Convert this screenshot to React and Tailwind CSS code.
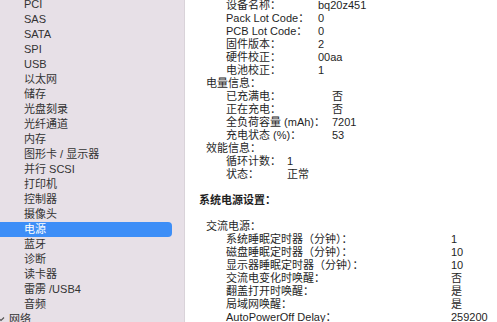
import React from "react";

const font = { fontFamily: '"Liberation Sans", "Noto Sans CJK SC", sans-serif' };

const sidebarItems = [
  "PCI", "SAS", "SATA", "SPI", "USB", "以太网", "储存", "光盘刻录", "光纤通道", "内存",
  "图形卡 / 显示器", "并行 SCSI", "打印机", "控制器", "摄像头", "电源", "蓝牙", "诊断", "读卡器",
  "雷雳 /USB4", "音频",
];

function Row({ label, value, labelW, indent }) {
  return (
    <div className={`flex h-[13px] items-center whitespace-nowrap ${indent}`}>
      <div className={labelW}>{label}</div>
      <div>{value}</div>
    </div>
  );
}

export default function App() {
  return (
    <div className="flex h-[322px] w-[497px] overflow-hidden text-[11px] leading-[13px]" style={font}>
      <div className="w-[185px] shrink-0 border-r border-[#d9d3d9] bg-[#e7e0e7] text-[#333]">
        <div className="mt-[-3.5px] flex flex-col">
          {sidebarItems.map((it) =>
            it === "电源" ? (
              <div key={it} className="flex h-[15px] w-[172px] items-center rounded-r-[4px] bg-[#3d8ef7] pl-[24px] text-white">
                {it}
              </div>
            ) : (
              <div key={it} className="flex h-[15px] items-center pl-[24px] whitespace-nowrap">
                {it}
              </div>
            )
          )}
          <div className="flex h-[15px] items-center pl-[9px]">
            <svg width="8" height="6" viewBox="0 0 8 6" className="ml-[-12px] mr-[4px]">
              <path d="M1 1.5 L4 4.5 L7 1.5" stroke="#555" strokeWidth="1.2" fill="none" />
            </svg>
            网络
          </div>
        </div>
      </div>
      <div className="flex-1 bg-white text-[#1f1f1f]">
        <div className="mt-[-1.5px] flex flex-col">
          <Row indent="pl-[41px]" labelW="w-[92px]" label="设备名称：" value="bq20z451" />
          <Row indent="pl-[41px]" labelW="w-[92px]" label="Pack Lot Code：" value="0" />
          <Row indent="pl-[41px]" labelW="w-[92px]" label="PCB Lot Code：" value="0" />
          <Row indent="pl-[41px]" labelW="w-[92px]" label="固件版本：" value="2" />
          <Row indent="pl-[41px]" labelW="w-[92px]" label="硬件校正：" value="00aa" />
          <Row indent="pl-[41px]" labelW="w-[92px]" label="电池校正：" value="1" />
          <div className="flex h-[13px] items-center pl-[21px]">电量信息：</div>
          <Row indent="pl-[41px]" labelW="w-[106px]" label="已充满电：" value="否" />
          <Row indent="pl-[41px]" labelW="w-[106px]" label="正在充电：" value="否" />
          <Row indent="pl-[41px]" labelW="w-[106px]" label="全负荷容量 (mAh)：" value="7201" />
          <Row indent="pl-[41px]" labelW="w-[106px]" label="充电状态 (%)：" value="53" />
          <div className="flex h-[13px] items-center pl-[21px]">效能信息：</div>
          <Row indent="pl-[41px]" labelW="w-[61px]" label="循环计数：" value="1" />
          <Row indent="pl-[41px]" labelW="w-[61px]" label="状态：" value="正常" />
          <div className="h-[13px]" />
          <div className="flex h-[13px] items-center pl-[14px] font-bold">系统电源设置：</div>
          <div className="h-[13px]" />
          <div className="flex h-[13px] items-center pl-[21px]">交流电源：</div>
          <Row indent="pl-[41px]" labelW="w-[225px]" label="系统睡眠定时器（分钟）：" value="1" />
          <Row indent="pl-[41px]" labelW="w-[225px]" label="磁盘睡眠定时器（分钟）：" value="10" />
          <Row indent="pl-[41px]" labelW="w-[225px]" label="显示器睡眠定时器（分钟）：" value="10" />
          <Row indent="pl-[41px]" labelW="w-[225px]" label="交流电变化时唤醒：" value="否" />
          <Row indent="pl-[41px]" labelW="w-[225px]" label="翻盖打开时唤醒：" value="是" />
          <Row indent="pl-[41px]" labelW="w-[225px]" label="局域网唤醒：" value="是" />
          <Row indent="pl-[41px]" labelW="w-[225px]" label="AutoPowerOff Delay：" value="259200" />
        </div>
      </div>
    </div>
  );
}
